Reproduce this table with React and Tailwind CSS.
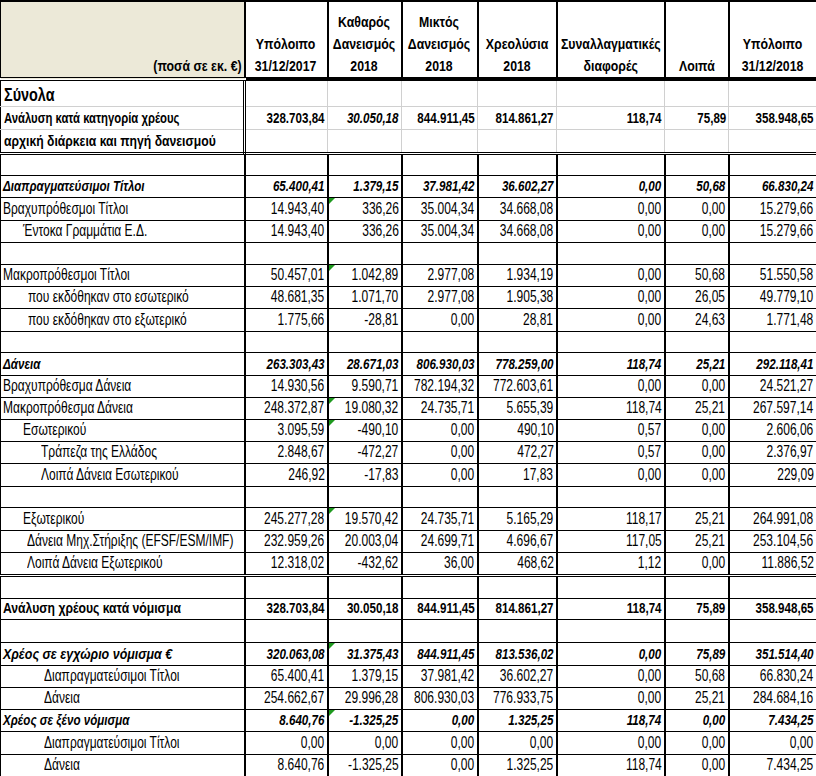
import React from 'react';

const rows = [
  { h: 22, label: 'Διαπραγματεύσιμοι Τίτλοι', s: 'bi', v: ['65.400,41', '1.379,15', '37.981,42', '36.602,27', '0,00', '50,68', '66.830,24'] },
  { h: 23, label: 'Βραχυπρόθεσμοι Τίτλοι', tri: true, v: ['14.943,40', '336,26', '35.004,34', '34.668,08', '0,00', '0,00', '15.279,66'] },
  { h: 22, label: 'Έντοκα Γραμμάτια Ε.Δ.', ind: 'pl-[22px]', v: ['14.943,40', '336,26', '35.004,34', '34.668,08', '0,00', '0,00', '15.279,66'] },
  { h: 22, blank: true },
  { h: 22, label: 'Μακροπρόθεσμοι Τίτλοι', tri: true, v: ['50.457,01', '1.042,89', '2.977,08', '1.934,19', '0,00', '50,68', '51.550,58'] },
  { h: 22, label: 'που εκδόθηκαν στο εσωτερικό', ind: 'pl-[27px]', v: ['48.681,35', '1.071,70', '2.977,08', '1.905,38', '0,00', '26,05', '49.779,10'] },
  { h: 23, label: 'που εκδόθηκαν στο εξωτερικό', ind: 'pl-[27px]', v: ['1.775,66', '-28,81', '0,00', '28,81', '0,00', '24,63', '1.771,48'] },
  { h: 21, blank: true },
  { h: 23, label: 'Δάνεια', s: 'bi', v: ['263.303,43', '28.671,03', '806.930,03', '778.259,00', '118,74', '25,21', '292.118,41'] },
  { h: 22, label: 'Βραχυπρόθεσμα Δάνεια', v: ['14.930,56', '9.590,71', '782.194,32', '772.603,61', '0,00', '0,00', '24.521,27'] },
  { h: 22, label: 'Μακροπρόθεσμα Δάνεια', tri: true, v: ['248.372,87', '19.080,32', '24.735,71', '5.655,39', '118,74', '25,21', '267.597,14'] },
  { h: 22, label: 'Εσωτερικού', ind: 'pl-[22px]', tri: true, v: ['3.095,59', '-490,10', '0,00', '490,10', '0,57', '0,00', '2.606,06'] },
  { h: 22, label: 'Τράπεζα της Ελλάδος', ind: 'pl-[40px]', v: ['2.848,67', '-472,27', '0,00', '472,27', '0,57', '0,00', '2.376,97'] },
  { h: 23, label: 'Λοιπά Δάνεια Εσωτερικού', ind: 'pl-[40px]', v: ['246,92', '-17,83', '0,00', '17,83', '0,00', '0,00', '229,09'] },
  { h: 21, blank: true },
  { h: 23, label: 'Εξωτερικού', ind: 'pl-[22px]', tri: true, v: ['245.277,28', '19.570,42', '24.735,71', '5.165,29', '118,17', '25,21', '264.991,08'] },
  { h: 22, label: 'Δάνεια Μηχ.Στήριξης (EFSF/ESM/IMF)', ind: 'pl-[26px]', v: ['232.959,26', '20.003,04', '24.699,71', '4.696,67', '117,05', '25,21', '253.104,56'] },
  { h: 23, label: 'Λοιπά Δάνεια Εξωτερικού', ind: 'pl-[26px]', sep: true, v: ['12.318,02', '-432,62', '36,00', '468,62', '1,12', '0,00', '11.886,52'] },
  { h: 23, blank: true },
  { h: 21, label: 'Ανάλυση χρέους κατά νόμισμα', s: 'b', v: ['328.703,84', '30.050,18', '844.911,45', '814.861,27', '118,74', '75,89', '358.948,65'] },
  { h: 23, blank: true },
  { h: 23, label: 'Χρέος σε εγχώριο νόμισμα €', s: 'bi', tri: true, lsx: 'scale-x-[0.86]', v: ['320.063,08', '31.375,43', '844.911,45', '813.536,02', '0,00', '75,89', '351.514,40'] },
  { h: 22, label: 'Διαπραγματεύσιμοι Τίτλοι', ind: 'pl-[43px]', v: ['65.400,41', '1.379,15', '37.981,42', '36.602,27', '0,00', '50,68', '66.830,24'] },
  { h: 22, label: 'Δάνεια', ind: 'pl-[43px]', v: ['254.662,67', '29.996,28', '806.930,03', '776.933,75', '0,00', '25,21', '284.684,16'] },
  { h: 22, label: 'Χρέος σε ξένο νόμισμα', s: 'bi', tri: true, v: ['8.640,76', '-1.325,25', '0,00', '1.325,25', '118,74', '0,00', '7.434,25'] },
  { h: 23, label: 'Διαπραγματεύσιμοι Τίτλοι', ind: 'pl-[43px]', v: ['0,00', '0,00', '0,00', '0,00', '0,00', '0,00', '0,00'] },
  { h: 22, label: 'Δάνεια', ind: 'pl-[43px]', v: ['8.640,76', '-1.325,25', '0,00', '1.325,25', '118,74', '0,00', '7.434,25'] },
];

const heights = {
  21: 'h-[21px]',
  22: 'h-[22px]',
  23: 'h-[23px]',
};

// regular text in the sheet is tall and narrow, bold a bit smaller and wider
const rowType = {
  n: { row: 'text-[16px]', cell: 'leading-[16px]', sx: 'scale-x-[0.75]', lsx: 'scale-x-[0.75]' },
  b: { row: 'text-[14.5px] font-bold', cell: 'leading-[15px]', sx: 'scale-x-[0.8]', lsx: 'scale-x-[0.84]' },
  bi: { row: 'text-[14.5px] font-bold italic', cell: 'leading-[15px]', sx: 'scale-x-[0.8]', lsx: 'scale-x-[0.8]' },
};

// Arial Narrow is not installed, so Liberation Sans gets squeezed to its width
const Narrow = ({ children, side = 'right', sx = 'scale-x-[0.82]', className = '' }) => {
  const wrap = side === 'right' ? 'justify-end' : side === 'left' ? 'justify-start' : 'justify-center';
  const origin = side === 'right' ? 'origin-right' : side === 'left' ? 'origin-left' : 'origin-center';
  return (
    <div className={`flex ${wrap}`}>
      <span className={`inline-block whitespace-nowrap ${sx} ${origin} ${className}`}>{children}</span>
    </div>
  );
};

const Triangle = () => (
  <span className="absolute left-0 top-0 w-0 h-0 border-t-[6px] border-t-[#1f9a1f] border-r-[6px] border-r-transparent" />
);

const headCols = [
  ['Υπόλοιπο', '31/12/2017'],
  ['Καθαρός', 'Δανεισμός', '2018'],
  ['Μικτός', 'Δανεισμός', '2018'],
  ['Χρεολύσια', '2018'],
  ['Συναλλαγματικές', 'διαφορές'],
  ['Λοιπά'],
  ['Υπόλοιπο', '31/12/2018'],
];

const totals = ['328.703,84', '30.050,18', '844.911,45', '814.861,27', '118,74', '75,89', '358.948,65'];

const App = () => {
  const cell = 'border-b border-r-2 border-black align-bottom pb-[3px]';

  return (
    <div className="w-[816px] h-[776px] overflow-hidden bg-white text-black font-['Liberation_Sans',Arial,sans-serif] text-[15px]">
      <table className="table-fixed border-collapse w-[816px] border-l border-black">
        <colgroup>
          <col className="w-[244px]" />
          <col className="w-[83px]" />
          <col className="w-[74px]" />
          <col className="w-[76px]" />
          <col className="w-[79px]" />
          <col className="w-[108px]" />
          <col className="w-[64px]" />
          <col className="w-[88px]" />
        </colgroup>
        <thead>
          <tr className="h-[78px] font-bold leading-[22px]">
            <th className="bg-[#ece9d8] border-t-2 border-r-2 border-b-4 border-double border-black align-bottom pr-[2px] font-bold">
              <Narrow side="right">(ποσά σε εκ. €)</Narrow>
            </th>
            {headCols.map((lines, i) => (
              <th key={i} className={`border-t-2 border-b-4 border-black align-bottom font-bold ${i < 6 ? 'border-r-2' : ''}`}>
                <Narrow side="center" className="text-center">
                  {lines.map((l, j) => (
                    <React.Fragment key={j}>
                      {j > 0 && <br />}
                      {l}
                    </React.Fragment>
                  ))}
                </Narrow>
              </th>
            ))}
          </tr>
        </thead>
        <tbody>
          {/* Σύνολα block */}
          <tr className="h-[27px]">
            <td className="border-r-[3px] border-double border-black border-b border-b-[#d0d0d0] align-bottom pl-[3px] pb-[2px] text-[18px] font-bold leading-[18px]">
              <Narrow side="left" sx="scale-x-[0.8]">Σύνολα</Narrow>
            </td>
            {Array.from({ length: 7 }).map((_, i) => (
              <td key={i} className="border-b border-r border-[#d0d0d0]" />
            ))}
          </tr>
          <tr className="h-[23px] font-bold text-[14.5px]">
            <td className="border-r-[3px] border-double border-black border-b border-b-[#d0d0d0] align-bottom pl-[3px] pb-[3px] leading-[15px]">
              <Narrow side="left" sx="scale-x-[0.78]">Ανάλυση κατά κατηγορία χρέους</Narrow>
            </td>
            {totals.map((v, i) => (
              <td key={i} className={`border-b border-r border-[#d0d0d0] align-bottom pr-[2px] pb-[3px] leading-[15px] ${i === 1 ? 'italic' : ''}`}>
                <Narrow sx="scale-x-[0.8]">{v}</Narrow>
              </td>
            ))}
          </tr>
          <tr className="h-[24px] font-bold text-[14.5px]">
            <td className="border-r-[3px] border-b-[3px] border-double border-black align-bottom pl-[3px] pb-[3px] leading-[15px]">
              <Narrow side="left" sx="scale-x-[0.84]">αρχική διάρκεια και πηγή δανεισμού</Narrow>
            </td>
            {Array.from({ length: 7 }).map((_, i) => (
              <td key={i} className="border-r border-r-[#d0d0d0] border-b-[3px] border-double border-b-black" />
            ))}
          </tr>
          <tr className="h-[22px]">
            {Array.from({ length: 8 }).map((_, i) => (
              <td key={i} className={cell} />
            ))}
          </tr>

          {rows.map((r, idx) => {
            const t = rowType[r.s || 'n'];
            const rowCls = `${heights[r.h]} ${t.row}`;
            const bottom = r.sep ? 'border-b-[3px] border-double' : '';
            if (r.blank) {
              return (
                <tr key={idx} className={rowCls}>
                  {Array.from({ length: 8 }).map((_, i) => (
                    <td key={i} className={cell} />
                  ))}
                </tr>
              );
            }
            return (
              <tr key={idx} className={rowCls}>
                <td className={`${cell} ${t.cell} ${bottom} ${r.ind || 'pl-[2px]'}`}>
                  <Narrow side="left" sx={r.lsx || t.lsx}>{r.label}</Narrow>
                </td>
                {r.v.map((v, i) => (
                  <td key={i} className={`${cell} ${t.cell} ${bottom} pr-[2px] ${i === 1 ? 'relative' : ''}`}>
                    {i === 1 && r.tri && <Triangle />}
                    <Narrow sx={t.sx}>{v}</Narrow>
                  </td>
                ))}
              </tr>
            );
          })}
        </tbody>
      </table>
    </div>
  );
};

export default App;
